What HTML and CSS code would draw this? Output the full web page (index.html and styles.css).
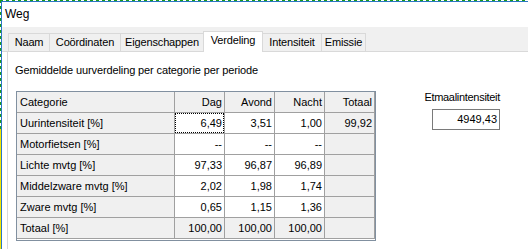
FILE: index.html
```html
<!DOCTYPE html>
<html>
<head>
<meta charset="utf-8">
<link rel="stylesheet" href="styles.css">
</head>
<body>
<div class="frame">
  <div class="win">
    <div class="titlebar">Weg</div>
    <div class="tabstrip">
      <div class="tab w-naam">Naam</div>
      <div class="tab w-coor">Coördinaten</div>
      <div class="tab w-eig">Eigenschappen</div>
      <div class="tab sel w-verd">Verdeling</div>
      <div class="tab w-int">Intensiteit</div>
      <div class="tab w-em">Emissie</div>
    </div>
    <div class="panel">
      <div class="caption">Gemiddelde uurverdeling per categorie per periode</div>
      <div class="body-row">
        <div class="grid">
          <div class="c fix">Categorie</div>
          <div class="c fix num">Dag</div>
          <div class="c fix num">Avond</div>
          <div class="c fix num">Nacht</div>
          <div class="c fix num">Totaal</div>

          <div class="c fix">Uurintensiteit [%]</div>
          <div class="c num focus">6,49</div>
          <div class="c num">3,51</div>
          <div class="c num">1,00</div>
          <div class="c fix num">99,92</div>

          <div class="c fix">Motorfietsen [%]</div>
          <div class="c num">--</div>
          <div class="c num">--</div>
          <div class="c num">--</div>
          <div class="c fix num"></div>

          <div class="c fix">Lichte mvtg [%]</div>
          <div class="c num">97,33</div>
          <div class="c num">96,87</div>
          <div class="c num">96,89</div>
          <div class="c fix num"></div>

          <div class="c fix">Middelzware mvtg [%]</div>
          <div class="c num">2,02</div>
          <div class="c num">1,98</div>
          <div class="c num">1,74</div>
          <div class="c fix num"></div>

          <div class="c fix">Zware mvtg [%]</div>
          <div class="c num">0,65</div>
          <div class="c num">1,15</div>
          <div class="c num">1,36</div>
          <div class="c fix num"></div>

          <div class="c fix">Totaal [%]</div>
          <div class="c fix num">100,00</div>
          <div class="c fix num">100,00</div>
          <div class="c fix num">100,00</div>
          <div class="c fix num"></div>
        </div>
        <div class="side">
          <div class="side-label">Etmaalintensiteit</div>
          <div class="side-box">4949,43</div>
        </div>
      </div>
    </div>
  </div>
</div>
</body>
</html>
```

FILE: styles.css
```css
html, body {
  margin: 0;
  padding: 0;
  background: #fff;
  overflow: hidden;
}
body {
  width: 528px;
  height: 249px;
  font-family: "Liberation Sans", Arial, sans-serif;
  font-size: 11px;
  color: #000;
}
.frame {
  box-sizing: border-box;
  width: 528px;
  height: 249px;
  overflow: hidden;
  padding: 1px 0 0 1px;
  background:
    repeating-linear-gradient(to right, #1a9a1a 0 3px, #fff 3px 6px) 0 0 / 100% 1px no-repeat,
    repeating-linear-gradient(to bottom, #1a9a1a 0 3px, #fff 3px 6px) 0 0 / 1px 129px no-repeat,
    linear-gradient(#f2e600, #f2e600) 0 129px / 1px 120px no-repeat,
    #fff;
}
.win {
  box-sizing: border-box;
  width: 527px;
  height: 248px;
  border-top: 1px solid #2b78c4;
  border-left: 1px solid #2b78c4;
  background: #fff;
  display: flex;
  flex-direction: column;
}
.titlebar {
  height: 25px;
  line-height: 24px;
  padding-left: 3px;
  font-size: 12px;
}
.tabstrip {
  height: 24px;
  background: #f0f0f0;
  border-bottom: 1px solid #d9d9d9;
  display: flex;
  align-items: flex-end;
  padding-left: 6px;
}
.tab {
  box-sizing: border-box;
  height: 18px;
  border: 1px solid #d9d9d9;
  border-bottom: none;
  margin-left: -1px;
  text-align: center;
  line-height: 17px;
  background: #f0f0f0;
  letter-spacing: -0.15px;
}
.tab:first-child { margin-left: 0; }
.tab.sel {
  height: 21px;
  margin-bottom: -1px;
  background: #fff;
  line-height: 16px;
  position: relative;
  z-index: 1;
}
.w-naam { width: 42px; }
.w-coor { width: 72px; }
.w-eig { width: 84px; }
.w-verd { width: 60px; }
.w-int { width: 60px; }
.w-em { width: 45px; }

.panel {
  flex: 1;
  margin-left: 5px;
  border-left: 1px solid #d9d9d9;
  padding: 11px 0 0 7px;
}
.caption {
  line-height: 14px;
  letter-spacing: -0.12px;
}
.body-row {
  display: flex;
  align-items: flex-start;
  margin-top: 14px;
  padding-left: 1px;
}
.grid {
  display: grid;
  grid-template-columns: 158px 50px 50px 50px 50px;
  grid-auto-rows: 21px;
  border: 1px solid #8190a0;
  padding-bottom: 1px;
  background: #fff;
}
.c {
  box-sizing: border-box;
  border-right: 1px solid #a0a0a0;
  border-bottom: 1px solid #a0a0a0;
  line-height: 20px;
  padding: 0 3px;
  white-space: nowrap;
  overflow: hidden;
  background: #fff;
  position: relative;
}
.fix { background: #f0f0f0; }
.num { text-align: right; padding-right: 2px; }
.focus::after {
  content: "";
  position: absolute;
  inset: 0;
  border: 1px dotted #000;
}
.side {
  margin-left: auto;
  margin-right: 28px;
  margin-top: -1px;
  display: flex;
  flex-direction: column;
  align-items: flex-end;
}
.side-label {
  line-height: 14px;
  letter-spacing: -0.3px;
}
.side-box {
  box-sizing: border-box;
  margin-top: 5px;
  width: 68px;
  height: 21px;
  border: 1px solid #7a7a7a;
  text-align: right;
  padding-right: 2px;
  line-height: 19px;
}
```
